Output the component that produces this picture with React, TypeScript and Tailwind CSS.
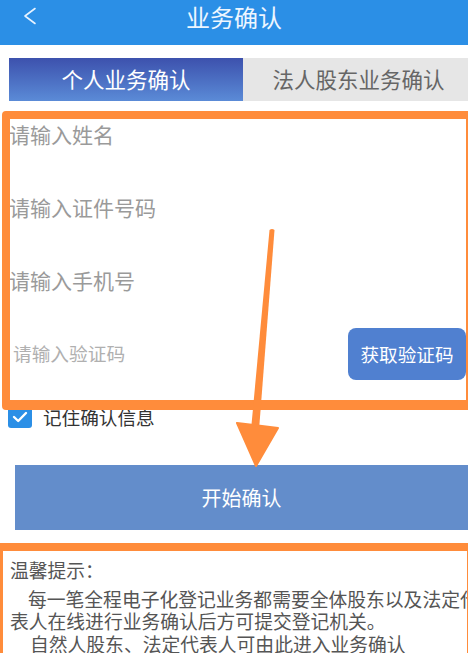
import React from "react";

const font = { fontFamily: '"Noto Sans CJK SC", "Noto Sans", sans-serif' };

export default function App() {
  return (
    <div className="relative w-[468px] h-[653px] overflow-hidden bg-white" style={font}>
      {/* Header */}
      <div className="relative flex h-[45px] items-start justify-center bg-[#2b8fe6]">
        <svg className="absolute left-[22px] top-[7px]" width="16" height="18" viewBox="0 0 16 18" fill="none">
          <path d="M13 1.5 L3 9 L13 16.5" stroke="#e6f2ff" strokeWidth="1.6" strokeLinecap="round" strokeLinejoin="round" />
        </svg>
        <span className="pt-[1px] text-[24px] leading-[32px] text-[#eef6ff]">业务确认</span>
      </div>

      {/* Tabs */}
      <div className="mt-[13px] flex h-[43px] pl-[9px]">
        <div className="flex w-[234px] items-center justify-center bg-gradient-to-b from-[#3d51ad] to-[#5b8bd7] text-[21.5px] text-white">
          个人业务确认
        </div>
        <div className="flex flex-1 items-center justify-center bg-[#e6e6e6] pl-[6px] text-[21.5px] text-[#666666]">
          法人股东业务确认
        </div>
      </div>

      {/* Form */}
      <div className="flex flex-col">
        <div className="-mt-[3px] flex h-[73px] items-center pl-[9px] text-[21px] text-[#9a9a9a]">请输入姓名</div>
        <div className="flex h-[73px] items-center pl-[9px] text-[21px] text-[#9a9a9a]">请输入证件号码</div>
        <div className="flex h-[73px] items-center pl-[9px] text-[21px] text-[#9a9a9a]">请输入手机号</div>
        <div className="flex h-[73px] items-center justify-between pl-[13px] pr-[2px]">
          <span className="text-[18.7px] text-[#b0b0b0]">请输入验证码</span>
          <div className="flex h-[52px] w-[118px] items-center justify-center rounded-[8px] bg-[#5080d0] text-[18.6px] text-white">
            获取验证码
          </div>
        </div>
      </div>

      {/* Remember */}
      <div className="mt-[16px] flex items-center gap-[11px] pl-[8px]">
        <div className="flex h-[22px] w-[24px] items-center justify-center rounded-[3px] bg-[#2b8fe6]">
          <svg width="16" height="12" viewBox="0 0 16 12" fill="none">
            <path d="M2 6 L6.2 10 L14 2" stroke="white" strokeWidth="2.4" strokeLinecap="round" strokeLinejoin="round" />
          </svg>
        </div>
        <span className="text-[18.6px] leading-[22px] text-[#333333]">记住确认信息</span>
      </div>

      {/* Start button */}
      <div className="ml-[15px] mt-[37px] flex h-[65px] items-center justify-center bg-[#638dcb] text-[20px] text-white">
        开始确认
      </div>

      {/* Tips */}
      <div className="mt-[29px] pl-[10px] text-[18.8px] leading-[22.5px] text-[#555555]">
        <div className="mb-[6px] whitespace-nowrap">温馨提示：</div>
        <div className="whitespace-nowrap pl-[18px]">每一笔全程电子化登记业务都需要全体股东以及法定代</div>
        <div className="whitespace-nowrap">表人在线进行业务确认后方可提交登记机关。</div>
        <div className="whitespace-nowrap pl-[20px]">自然人股东、法定代表人可由此进入业务确认</div>
      </div>

      {/* Orange annotation rectangle */}
      <div className="pointer-events-none absolute left-[2px] top-[111px] h-[299px] w-[472px] rounded-[4px] border-[8px] border-b-[10px] border-[#ff8c3b]" />
      {/* Orange annotation bottom box */}
      <div className="pointer-events-none absolute left-[-5px] top-[543px] h-[140px] w-[480px] rounded-[4px] border-[8px] border-[#ff8c3b]" />

      {/* Arrow */}
      <svg className="pointer-events-none absolute left-0 top-0" width="468" height="653" viewBox="0 0 468 653">
        <path d="M269.5 230 Q272 228 274.5 230 L259 430 L251 430 Z" fill="#ff8c3b" />
        <path d="M237 423 L278 428 L256 466 Z" fill="#ff8c3b" strokeLinejoin="round" stroke="#ff8c3b" strokeWidth="2" />
      </svg>
    </div>
  );
}
